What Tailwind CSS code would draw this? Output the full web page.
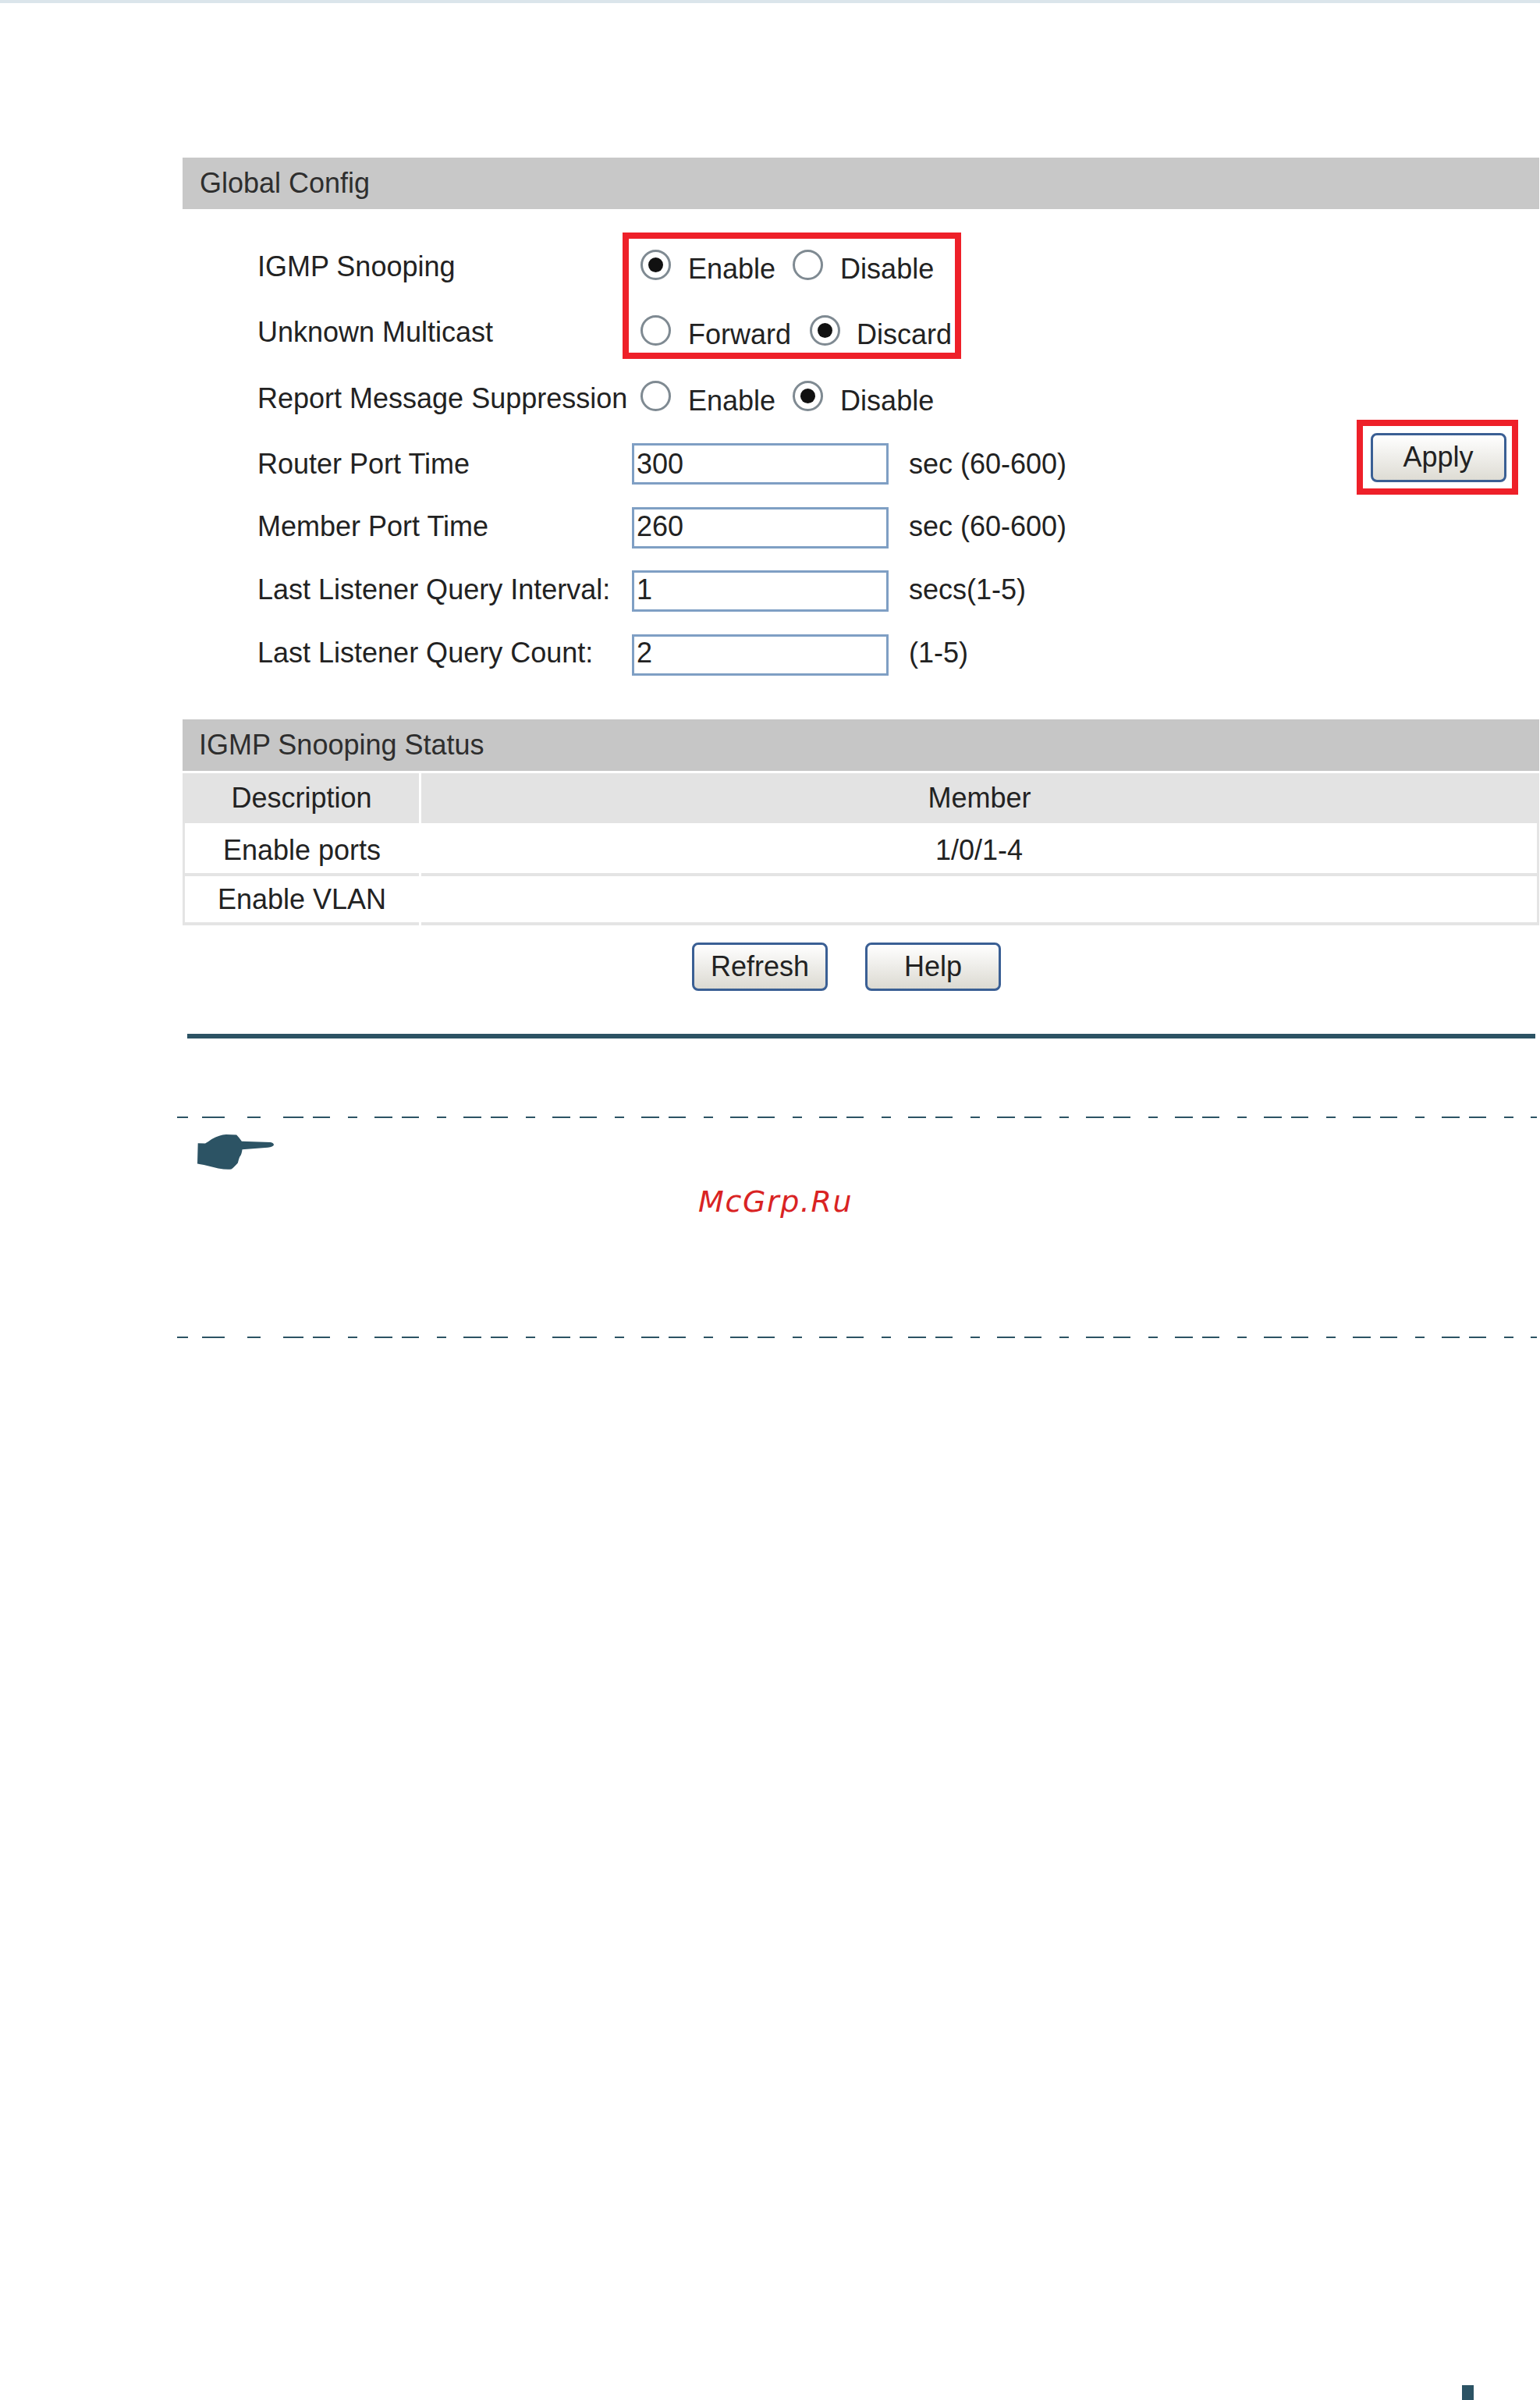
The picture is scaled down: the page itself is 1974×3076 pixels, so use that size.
<!DOCTYPE html>
<html lang="en">
<head>
<meta charset="utf-8">
<title>IGMP Snooping Global Config</title>
<script src="https://cdn.jsdelivr.net/npm/@tailwindcss/browser@4"></script>
</head>
<body class="bg-white">
<div class="w-[1974px] h-[3076px] flex flex-col overflow-hidden bg-white font-['Liberation_Sans',Arial,sans-serif] text-[36px] text-[#222]">
  <div class="h-[4px] bg-[#dbe5eb] shrink-0"></div>

  <div class="mt-[198px] ml-[234px] w-[1739px] h-[66px] bg-[#c8c8c8] flex items-center pl-[22px] text-[#2e2e2e]">Global Config</div>

  <div class="relative ml-[330px] mt-[32px] mb-[42px] flex flex-col">
    <div class="absolute left-[468px] top-[-2px] w-[434px] h-[162px] border-[8px] border-[#ee2029]"></div>

    <div class="h-[84px] flex items-center">
      <span class="w-[491px]">IGMP Snooping</span>
      <div class="flex items-center gap-[22px]">
        <span class="w-[39px] h-[39px] rounded-full border-[3px] border-[#7f8a92] bg-white flex items-center justify-center -translate-y-[3px]"><span class="w-[19px] h-[19px] rounded-full bg-[#111]"></span></span>
        <span class="translate-y-[3px]">Enable</span>
        <span class="w-[39px] h-[39px] rounded-full border-[3px] border-[#7f8a92] bg-white -translate-y-[3px]"></span>
        <span class="translate-y-[3px]">Disable</span>
      </div>
    </div>
    <div class="h-[84px] flex items-center">
      <span class="w-[491px]">Unknown Multicast</span>
      <div class="flex items-center gap-[22px]">
        <span class="w-[39px] h-[39px] rounded-full border-[3px] border-[#7f8a92] bg-white -translate-y-[3px]"></span>
        <span class="translate-y-[3px]">Forward</span>
        <span class="ml-[2px] mr-[-1px] w-[39px] h-[39px] rounded-full border-[3px] border-[#7f8a92] bg-white flex items-center justify-center -translate-y-[3px]"><span class="w-[19px] h-[19px] rounded-full bg-[#111]"></span></span>
        <span class="translate-y-[3px]">Discard</span>
      </div>
    </div>
    <div class="h-[85px] flex items-center">
      <span class="w-[491px]">Report Message Suppression</span>
      <div class="flex items-center gap-[22px]">
        <span class="w-[39px] h-[39px] rounded-full border-[3px] border-[#7f8a92] bg-white -translate-y-[3px]"></span>
        <span class="translate-y-[3px]">Enable</span>
        <span class="w-[39px] h-[39px] rounded-full border-[3px] border-[#7f8a92] bg-white flex items-center justify-center -translate-y-[3px]"><span class="w-[19px] h-[19px] rounded-full bg-[#111]"></span></span>
        <span class="translate-y-[3px]">Disable</span>
      </div>
    </div>
    <div class="h-[83px] flex items-center">
      <span class="w-[480px]">Router Port Time</span>
      <div class="w-[329px] h-[53px] border-[3px] border-[#7f9fc4] px-[3px] flex items-center">300</div>
      <span class="ml-[26px]">sec (60-600)</span>
      <div class="absolute left-[1409px] top-[238px] w-[207px] h-[96px] border-[8px] border-[#ee2029] flex items-center justify-center pl-[2px]">
        <button class="w-[174px] h-[63px] rounded-[8px] border-[3px] border-[#3a5f94] bg-gradient-to-b from-white to-[#dedcd4] text-[36px] text-[#222]">Apply</button>
      </div>
    </div>
    <div class="h-[81px] flex items-center">
      <span class="w-[480px] -translate-y-[2px]">Member Port Time</span>
      <div class="w-[329px] h-[53px] border-[3px] border-[#7f9fc4] px-[3px] pb-[4px] flex items-center">260</div>
      <span class="ml-[26px] -translate-y-[2px]">sec (60-600)</span>
    </div>
    <div class="h-[81px] flex items-center">
      <span class="w-[480px] -translate-y-[2px]">Last Listener Query Interval:</span>
      <div class="w-[329px] h-[53px] border-[3px] border-[#7f9fc4] px-[3px] pb-[4px] flex items-center">1</div>
      <span class="ml-[26px] -translate-y-[2px]">secs(1-5)</span>
    </div>
    <div class="h-[82px] flex items-center">
      <span class="w-[480px] -translate-y-[2px]">Last Listener Query Count:</span>
      <div class="w-[329px] h-[53px] border-[3px] border-[#7f9fc4] px-[3px] pb-[4px] flex items-center">2</div>
      <span class="ml-[26px] -translate-y-[2px]">(1-5)</span>
    </div>
  </div>

  <div class="ml-[234px] w-[1739px] h-[66px] bg-[#c6c6c6] flex items-center pl-[21px] text-[#2e2e2e]">IGMP Snooping Status</div>
  <div class="ml-[234px] w-[1739px] mt-[3px] grid grid-cols-[303px_1fr] gap-x-[3px] text-center">
    <div class="h-[64px] bg-[#e3e3e3] flex items-center justify-center pl-[2px]">Description</div>
    <div class="h-[64px] bg-[#e3e3e3] flex items-center justify-center pr-[2px]">Member</div>
    <div class="h-[68px] pt-[6px] border-l-[3px] border-b-[4px] border-[#e4e4e4] flex items-center justify-center">Enable ports</div>
    <div class="h-[68px] pt-[6px] border-r-[3px] border-b-[4px] border-[#e4e4e4] flex items-center justify-center">1/0/1-4</div>
    <div class="h-[63px] border-l-[3px] border-b-[4px] border-[#e4e4e4] flex items-center justify-center">Enable VLAN</div>
    <div class="h-[63px] border-r-[3px] border-b-[4px] border-[#e4e4e4]"></div>
  </div>

  <div class="mt-[22px] ml-[887px] flex gap-[48px]">
    <button class="w-[174px] h-[62px] rounded-[8px] border-[3px] border-[#3a5f94] bg-gradient-to-b from-white to-[#dcdad2] text-[36px] text-[#222]">Refresh</button>
    <button class="w-[174px] h-[62px] rounded-[8px] border-[3px] border-[#3a5f94] bg-gradient-to-b from-white to-[#dcdad2] text-[36px] text-[#222]">Help</button>
  </div>

  <div class="mt-[55px] ml-[240px] w-[1728px] h-[6px] bg-[#2c5364] shrink-0"></div>

  <svg class="mt-[100px] block shrink-0" width="1974" height="2" viewBox="0 0 1974 2" fill="none" stroke="#2c5364" stroke-width="2">
    <path d="M227 1h14M259 1h29M317 1h17M363 1h26M401 1h22"/>
    <line x1="446" y1="1" x2="1970" y2="1" stroke-dasharray="12 22 23 12 22 23"/>
  </svg>
  <div class="h-[280px] flex items-start shrink-0">
    <svg class="ml-[253px] mt-[21px] shrink-0" width="98" height="45" viewBox="160 159 293 134" fill="#2c5364">
      <path d="M162 192 L190 193 Q205 185 215 177 Q245 160 270 159 L310 160 Q320 170 330 185 L440 189 Q453 192 453 199 Q450 206 430 209 L332 216 Q330 235 322 245 Q318 255 315 268 Q300 285 290 292 Q270 294 240 289 L185 275 L160 271 Z"/>
    </svg>
    <span class="ml-[544px] mt-[84px] leading-[46px] text-[38px] italic tracking-[1.6px] text-[#d92323] font-['DejaVu_Sans',sans-serif]">McGrp.Ru</span>
  </div>
  <svg class="block shrink-0" width="1974" height="2" viewBox="0 0 1974 2" fill="none" stroke="#2c5364" stroke-width="2">
    <path d="M227 1h14M259 1h29M317 1h17M363 1h26M401 1h22"/>
    <line x1="446" y1="1" x2="1970" y2="1" stroke-dasharray="12 22 23 12 22 23"/>
  </svg>

  <div class="flex-1"></div>
  <div class="ml-[1874px] w-[15px] h-[19px] bg-[#2c5364] shrink-0"></div>
</div>
</body>
</html>
